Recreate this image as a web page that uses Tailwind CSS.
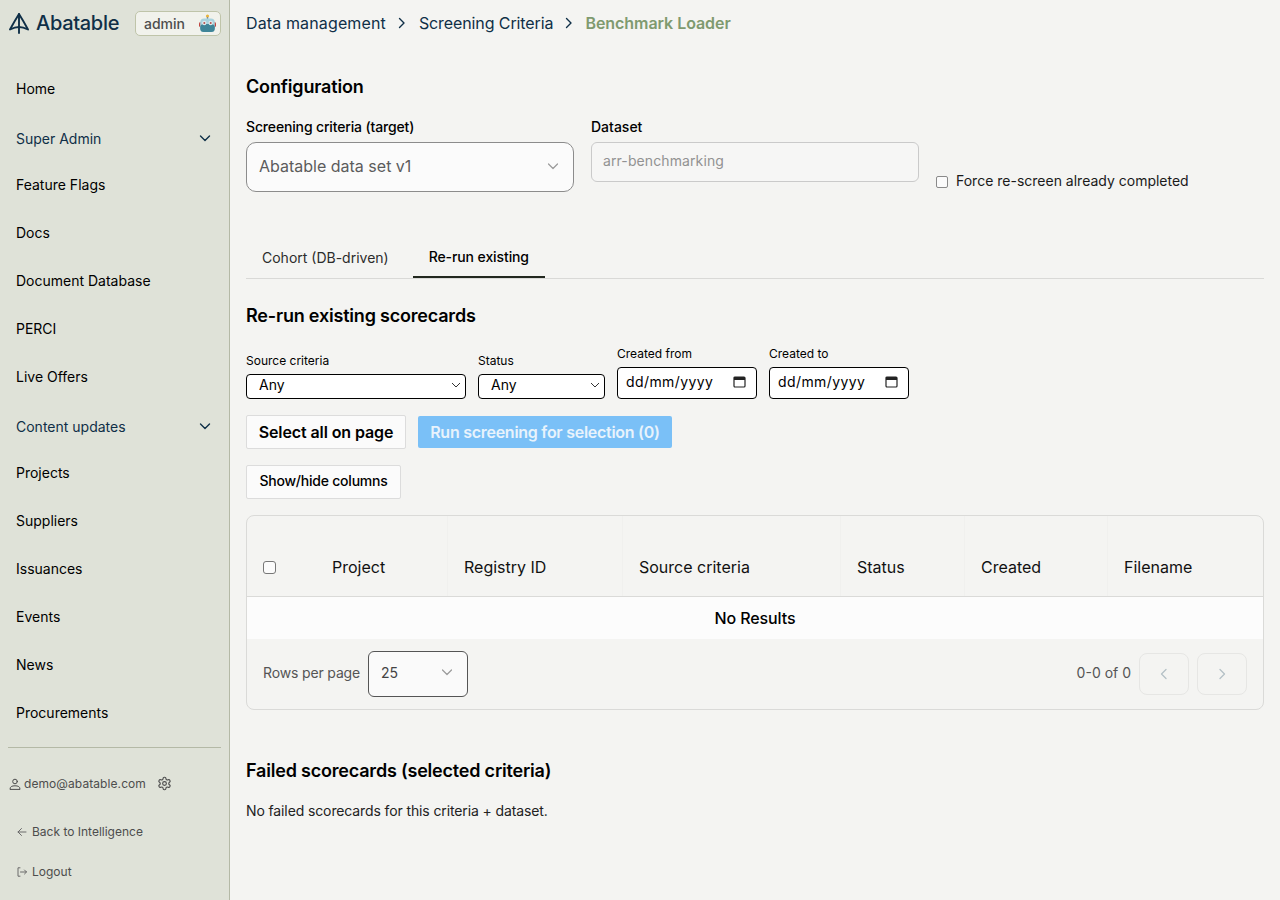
<!DOCTYPE html>
<html lang="en">
<head>
  <meta charset="UTF-8" />
  <title>Benchmark Loader</title>
  <script src="https://cdn.jsdelivr.net/npm/@tailwindcss/browser@4"></script>
</head>
<body class="font-['Inter',sans-serif] bg-[#f4f4f2] text-black">
<div class="flex h-[900px] w-[1280px] overflow-hidden">

  <!-- SIDEBAR -->
  <aside class="w-[230px] shrink-0 h-full bg-[#dfe2d8] border-r border-[#b4b9a6] flex flex-col">
    <div class="h-[46px] pl-[9px] pr-[8px] flex items-center justify-between">
      <div class="flex items-center gap-[7px] text-[#0f2f47]">
        <svg width="20" height="21" viewBox="0 0 20 21" fill="none" stroke="currentColor" stroke-width="1.9" stroke-linejoin="round" stroke-linecap="round">
          <path d="M10 1 Q5 9 1 16.5 Q6 14 10 14 Q14 14 19 16.5 Q15 9 10 1 Z"/>
          <path d="M10 1 V20"/>
        </svg>
        <span class="text-[20px] font-medium leading-none tracking-[-0.3px]">Abatable</span>
      </div>
      <div class="w-[86px] h-[25px] rounded-[5px] border border-[#bfc4a9] bg-[#f1f2ec] flex items-center justify-between pl-[8px] pr-[4px]">
        <span class="text-[14px] font-medium text-[#4d4d4d]">admin</span>
        <svg width="17" height="19" viewBox="0 0 17 19">
          <circle cx="8.5" cy="2" r="1.6" fill="#e8b33d"/>
          <rect x="7.8" y="3" width="1.4" height="2" fill="#7d8a94"/>
          <rect x="0" y="8" width="17" height="5" rx="1.5" fill="#c0453f"/>
          <rect x="1.2" y="4.5" width="14.6" height="13.5" rx="4" fill="#a9d3de"/>
          <rect x="1.2" y="10" width="14.6" height="8" rx="3.5" fill="#3f8598"/>
          <circle cx="5.3" cy="9" r="2.2" fill="#dfe9ec"/>
          <circle cx="11.7" cy="9" r="2.2" fill="#dfe9ec"/>
          <circle cx="5.3" cy="9" r="1" fill="#b5504c"/>
          <circle cx="11.7" cy="9" r="1" fill="#b5504c"/>
        </svg>
      </div>
    </div>

    <nav class="mt-[19px] text-[14px] leading-none">
      <div class="h-[48px] pl-[16px] flex items-center">Home</div>
      <div class="h-[48px] mt-[2px] -mb-[2px] pl-[16px] pr-[18px] flex items-center justify-between text-[#0f2f47]">
        <span>Super Admin</span>
        <svg width="12" height="12" viewBox="0 0 12 12" fill="none" stroke="currentColor" stroke-width="1.4" stroke-linecap="round" stroke-linejoin="round" class="-mt-[2px]"><path d="M1.5 4 L6 8.5 L10.5 4"/></svg>
      </div>
      <div class="h-[48px] pl-[16px] flex items-center">Feature Flags</div>
      <div class="h-[48px] pl-[16px] flex items-center">Docs</div>
      <div class="h-[48px] pl-[16px] flex items-center">Document Database</div>
      <div class="h-[48px] pl-[16px] flex items-center">PERCI</div>
      <div class="h-[48px] pl-[16px] flex items-center">Live Offers</div>
      <div class="h-[48px] mt-[2px] -mb-[2px] pl-[16px] pr-[18px] flex items-center justify-between text-[#0f2f47]">
        <span>Content updates</span>
        <svg width="12" height="12" viewBox="0 0 12 12" fill="none" stroke="currentColor" stroke-width="1.4" stroke-linecap="round" stroke-linejoin="round" class="-mt-[2px]"><path d="M1.5 4 L6 8.5 L10.5 4"/></svg>
      </div>
      <div class="h-[48px] pl-[16px] flex items-center">Projects</div>
      <div class="h-[48px] pl-[16px] flex items-center">Suppliers</div>
      <div class="h-[48px] pl-[16px] flex items-center">Issuances</div>
      <div class="h-[48px] pl-[16px] flex items-center">Events</div>
      <div class="h-[48px] pl-[16px] flex items-center">News</div>
      <div class="h-[48px] pl-[16px] flex items-center">Procurements</div>
    </nav>

    <div class="mt-[10px] mx-[8px] border-t border-[#b4b9a6]"></div>

    <div class="mt-[28px] h-[15px] pl-[9px] flex items-center text-[12px] leading-none text-[#4d4d4d]">
      <svg width="12" height="12" viewBox="0 0 12 12" fill="none" stroke="currentColor" stroke-width="1" stroke-linecap="round"><circle cx="6" cy="3.5" r="2.3"/><path d="M1 11 C1 8.5 3 7.8 6 7.8 C9 7.8 11 8.5 11 11 Z"/></svg>
      <span class="ml-[3px] tracking-[0.08px]">demo@abatable.com</span>
      <svg class="ml-[11px]" width="15" height="15" viewBox="0 0 24 24" fill="none" stroke="currentColor" stroke-width="1.8" stroke-linecap="round" stroke-linejoin="round"><path d="M12.22 2h-.44a2 2 0 0 0-2 2v.18a2 2 0 0 1-1 1.73l-.43.25a2 2 0 0 1-2 0l-.15-.08a2 2 0 0 0-2.73.73l-.22.38a2 2 0 0 0 .73 2.73l.15.1a2 2 0 0 1 1 1.72v.51a2 2 0 0 1-1 1.74l-.15.09a2 2 0 0 0-.73 2.73l.22.38a2 2 0 0 0 2.73.73l.15-.08a2 2 0 0 1 2 0l.43.25a2 2 0 0 1 1 1.73V20a2 2 0 0 0 2 2h.44a2 2 0 0 0 2-2v-.18a2 2 0 0 1 1-1.73l.43-.25a2 2 0 0 1 2 0l.15.08a2 2 0 0 0 2.73-.73l.22-.39a2 2 0 0 0-.73-2.73l-.15-.08a2 2 0 0 1-1-1.74v-.5a2 2 0 0 1 1-1.74l.15-.09a2 2 0 0 0 .73-2.73l-.22-.38a2 2 0 0 0-2.73-.73l-.15.08a2 2 0 0 1-2 0l-.43-.25a2 2 0 0 1-1-1.73V4a2 2 0 0 0-2-2z"/><circle cx="12" cy="12" r="3"/></svg>
    </div>

    <div class="mt-[35px] pl-[17px] flex items-center text-[12px] leading-none text-[#4d4d4d]">
      <svg width="10" height="10" viewBox="0 0 10 10" fill="none" stroke="#6b6b6b" stroke-width="1" stroke-linecap="round" stroke-linejoin="round"><path d="M9 5 H1 M4.5 1.5 L1 5 L4.5 8.5"/></svg>
      <span class="ml-[5px]">Back to Intelligence</span>
    </div>
    <div class="mt-[28px] pl-[17px] flex items-center text-[12px] leading-none text-[#4d4d4d]">
      <svg width="10" height="10" viewBox="0 0 10 10" fill="none" stroke="#6b6b6b" stroke-width="1" stroke-linecap="round" stroke-linejoin="round"><path d="M3 .8 H1 V9.2 H3 M3.5 5 H9.5 M7.5 3 L9.5 5 L7.5 7"/></svg>
      <span class="ml-[5px]">Logout</span>
    </div>
  </aside>

  <!-- MAIN -->
  <main class="flex-1 pl-[16px] pr-[16px]">
    <div class="h-[46px] flex items-center text-[16px] text-[#0f2f47]">
      <span class="tracking-[0.13px]">Data management</span>
      <svg class="ml-[12px] mr-[13px]" width="8" height="12" viewBox="0 0 8 12" fill="none" stroke="currentColor" stroke-width="1.4" stroke-linecap="round" stroke-linejoin="round"><path d="M1.5 1.5 L6 6 L1.5 10.5"/></svg>
      <span class="tracking-[-0.1px]">Screening Criteria</span>
      <svg class="mx-[12px]" width="8" height="12" viewBox="0 0 8 12" fill="none" stroke="currentColor" stroke-width="1.4" stroke-linecap="round" stroke-linejoin="round"><path d="M1.5 1.5 L6 6 L1.5 10.5"/></svg>
      <span class="font-semibold text-[#7f9a6f] tracking-[-0.05px]">Benchmark Loader</span>
    </div>

    <h2 class="mt-[28px] h-[26px] leading-[26px] text-[18px] font-semibold tracking-[-0.15px]">Configuration</h2>

    <div class="mt-[18px] flex items-start">
      <div class="w-[328px]">
        <div class="h-[17px] leading-[17px] text-[14px] font-medium tracking-[-0.15px]">Screening criteria (target)</div>
        <div class="mt-[7px] h-[50px] rounded-[10px] border border-[#8c8c8c] bg-[#fbfbfb] pl-[12px] pr-[14px] pb-[2px] flex items-center justify-between text-[16px] text-[#5c5c5c]">
          <span>Abatable data set v1</span>
          <svg width="12" height="12" viewBox="0 0 12 12" fill="none" stroke="#9a9a9a" stroke-width="1.2" stroke-linecap="round" stroke-linejoin="round"><path d="M1.5 4 L6 8.5 L10.5 4"/></svg>
        </div>
      </div>
      <div class="w-[328px] ml-[17px]">
        <div class="h-[17px] leading-[17px] text-[14px] font-medium">Dataset</div>
        <div class="mt-[7px] h-[40px] rounded-[6px] border border-[#cacaca] bg-[#f6f6f5] pl-[11px] pb-[3px] flex items-center text-[14px] text-[#929292] tracking-[0.1px]">arr-benchmarking</div>
      </div>
      <div class="ml-[17px] mt-[54px] h-[17px] flex items-center text-[14px] text-[#1a1a1a]">
        <span class="w-[12px] h-[12px] rounded-[2px] border border-[#8a8a8a] bg-[#fbfbfb] mt-[2px]"></span>
        <span class="ml-[8px]">Force re-screen already completed</span>
      </div>
    </div>

    <div class="mt-[45px] h-[42px] border-b border-[#d9d9d7] flex text-[14px]">
      <div class="px-[16px] h-[41px] flex items-center text-[#2c2c2c]">Cohort (DB-driven)</div>
      <div class="ml-[8px] px-[16px] h-[41px] flex items-center font-medium border-b-2 border-[#22281f] tracking-[-0.1px]">Re-run existing</div>
    </div>

    <h2 class="mt-[24px] h-[26px] leading-[26px] text-[18px] font-semibold tracking-[-0.2px]">Re-run existing scorecards</h2>

    <div class="mt-[19px] flex items-end text-[12px] leading-none">
      <div class="w-[220px]">
        <div class="h-[12px] mb-[7px]">Source criteria</div>
        <div class="h-[25px] rounded-[4px] border border-black bg-white pl-[12px] pr-[4px] pb-[3px] flex items-center justify-between text-[14px]">
          <span>Any</span>
          <svg width="10" height="10" viewBox="0 0 10 10" fill="none" stroke="#333" stroke-width="1"><path d="M1 3 L5 7 L9 3"/></svg>
        </div>
      </div>
      <div class="w-[127px] ml-[12px]">
        <div class="h-[12px] mb-[7px]">Status</div>
        <div class="h-[25px] rounded-[4px] border border-black bg-white pl-[12px] pr-[4px] pb-[3px] flex items-center justify-between text-[14px]">
          <span>Any</span>
          <svg width="10" height="10" viewBox="0 0 10 10" fill="none" stroke="#333" stroke-width="1"><path d="M1 3 L5 7 L9 3"/></svg>
        </div>
      </div>
      <div class="w-[140px] ml-[12px]">
        <div class="h-[12px] mb-[7px]">Created from</div>
        <div class="h-[32px] rounded-[4px] border border-black bg-white pl-[8px] pr-[10px] pb-[3px] flex items-center justify-between text-[14px] tracking-[0.4px]">
          <span>dd/mm/yyyy</span>
          <svg width="13" height="13" viewBox="0 0 13 13" fill="none"><rect x="1" y="2" width="11" height="10" rx="1" stroke="#222" stroke-width="1.2"/><rect x="1" y="2" width="11" height="3" fill="#222"/></svg>
        </div>
      </div>
      <div class="w-[140px] ml-[12px]">
        <div class="h-[12px] mb-[7px]">Created to</div>
        <div class="h-[32px] rounded-[4px] border border-black bg-white pl-[8px] pr-[10px] pb-[3px] flex items-center justify-between text-[14px] tracking-[0.4px]">
          <span>dd/mm/yyyy</span>
          <svg width="13" height="13" viewBox="0 0 13 13" fill="none"><rect x="1" y="2" width="11" height="10" rx="1" stroke="#222" stroke-width="1.2"/><rect x="1" y="2" width="11" height="3" fill="#222"/></svg>
        </div>
      </div>
    </div>

    <div class="mt-[16px] flex items-center">
      <div class="w-[160px] h-[34px] rounded-[2px] border border-[#dcdcdc] bg-[#fbfbfb] flex items-center justify-center text-[16px] font-semibold tracking-[-0.1px]">Select all on page</div>
      <div class="ml-[12px] w-[254px] h-[32px] rounded-[2px] bg-[#7ac0f7] flex items-center justify-center text-[16px] font-semibold text-[#e8f3fc] tracking-[-0.27px]">Run screening for selection (0)</div>
    </div>

    <div class="mt-[16px] w-[155px] h-[34px] rounded-[2px] border border-[#dcdcdc] bg-[#fbfbfb] pb-[4px] flex items-center justify-center text-[14px] font-medium tracking-[-0.22px]">Show/hide columns</div>

    <!-- TABLE -->
    <div class="mt-[16px] h-[195px] rounded-[8px] border border-[#dadad8] overflow-hidden">
      <div class="h-[81px] border-b border-[#dadad8] grid grid-cols-[69px_132px_175px_218px_124px_143px_1fr] text-[16px] text-[#111]">
        <div class="flex items-center pl-[16px] pt-[22px]"><span class="w-[13px] h-[13px] rounded-[3px] border border-[#777] bg-[#fbfbfb]"></span></div>
        <div class="flex items-center pl-[16px] pt-[21px] border-r border-[#f0f0ee]">Project</div>
        <div class="flex items-center pl-[16px] pt-[21px] border-r border-[#f0f0ee]">Registry ID</div>
        <div class="flex items-center pl-[16px] pt-[21px] border-r border-[#f0f0ee]">Source criteria</div>
        <div class="flex items-center pl-[16px] pt-[21px] border-r border-[#f0f0ee]">Status</div>
        <div class="flex items-center pl-[16px] pt-[21px] border-r border-[#f0f0ee]">Created</div>
        <div class="flex items-center pl-[16px] pt-[21px]">Filename</div>
      </div>
      <div class="h-[42px] bg-[#fcfcfc] flex items-center justify-center text-[16px] font-medium tracking-[-0.1px]">No Results</div>
      <div class="h-[70px] pl-[16px] pr-[16px] flex items-center justify-between text-[14px] text-[#555]">
        <div class="flex items-center">
          <span class="tracking-[-0.15px] mb-[4px]">Rows per page</span>
          <div class="ml-[8px] w-[100px] h-[46px] rounded-[6px] border border-[#555] bg-[#fafafa] pl-[12px] pr-[14px] pb-[4px] flex items-center justify-between text-[#444]">
            <span>25</span>
            <svg width="12" height="12" viewBox="0 0 12 12" fill="none" stroke="#9a9a9a" stroke-width="1.2" stroke-linecap="round" stroke-linejoin="round"><path d="M1.5 4 L6 8.5 L10.5 4"/></svg>
          </div>
        </div>
        <div class="flex items-center">
          <span class="mb-[4px]">0-0 of 0</span>
          <div class="ml-[8px] w-[50px] h-[42px] rounded-[8px] border border-[#e6e6e4] flex items-center justify-center">
            <svg width="8" height="12" viewBox="0 0 8 12" fill="none" stroke="#b4c0c6" stroke-width="1.3" stroke-linecap="round" stroke-linejoin="round"><path d="M6 1.5 L1.5 6 L6 10.5"/></svg>
          </div>
          <div class="ml-[8px] w-[50px] h-[42px] rounded-[8px] border border-[#e6e6e4] flex items-center justify-center">
            <svg width="8" height="12" viewBox="0 0 8 12" fill="none" stroke="#b4c0c6" stroke-width="1.3" stroke-linecap="round" stroke-linejoin="round"><path d="M2 1.5 L6.5 6 L2 10.5"/></svg>
          </div>
        </div>
      </div>
    </div>

    <h2 class="mt-[48px] h-[26px] leading-[26px] text-[18px] font-semibold tracking-[-0.2px]">Failed scorecards (selected criteria)</h2>
    <p class="mt-[18px] text-[14px] leading-[17px] text-[#222] tracking-[-0.12px]">No failed scorecards for this criteria + dataset.</p>
  </main>
</div>
</body>
</html>
